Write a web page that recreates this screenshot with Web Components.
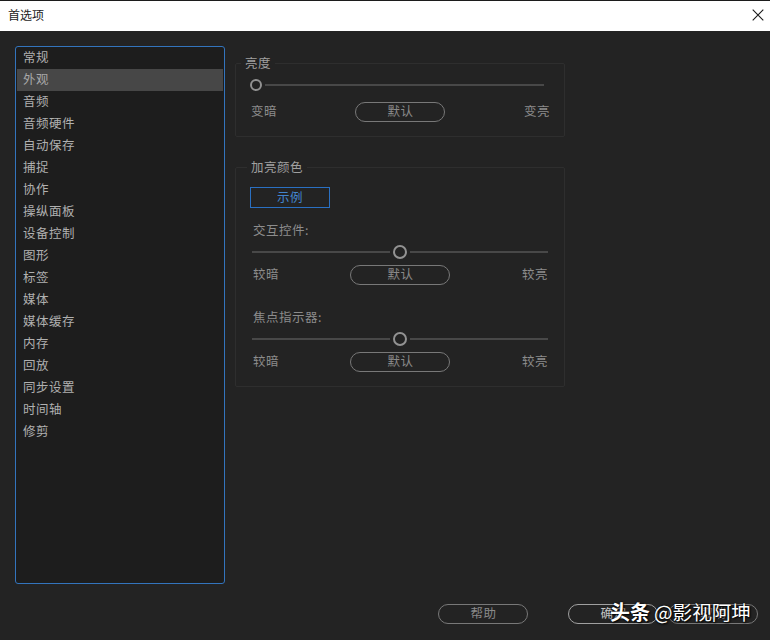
<!DOCTYPE html>
<html lang="zh-CN"><head><meta charset="utf-8"><title>首选项</title>
<style>
html,body{margin:0;height:100%;background:#232323}
body{font:13px/18px "Noto Sans CJK SC","Liberation Sans",sans-serif}
</style></head><body>
<pref-dialog></pref-dialog>
<script>
function def(name, css, html, init){
  customElements.define(name, class extends HTMLElement{
    constructor(){super();const s=this.attachShadow({mode:'open'});
      s.innerHTML='<style>'+css+'</style>'+html;}
    connectedCallback(){ if(init) init(this, this.shadowRoot); }
  });
}
const FONT='"Noto Sans CJK SC","Liberation Sans",sans-serif';

def('title-bar',`:host{display:flex;align-items:center;justify-content:space-between;box-sizing:border-box;height:31px;border-top:1px solid #1c1c1c;background:#fff;color:#1c1c1c;padding:0 6px 2px 8px;font:12px/18px ${FONT}}
svg{display:block;width:12px;height:12px}`,
`<slot></slot><svg viewBox="0 0 12 12" fill="none" stroke="#1a1a1a" stroke-width="1.1"><path d="M.7.7 11.3 11.3M11.3.7.7 11.3"/></svg>`);

def('nav-list',`:host{display:block;box-sizing:border-box;width:210px;height:538px;border:1px solid #3374bd;border-radius:3px;background:#1d1d1d;padding:0 1px}`,
`<slot></slot>`);
def('nav-item',`:host{display:block;height:22px;line-height:20px;padding-left:6px;color:#b0b0b0;letter-spacing:.5px;font-size:12.5px}
:host([selected]){background:#474747;color:#a8a8a8}`,`<slot></slot>`);

def('group-box',`:host{display:block;width:330px}
fieldset{margin:0;border:1px solid #2e2e2e;border-radius:2px;padding:var(--pad,7px 0 14px);min-width:0}
legend{margin-left:var(--leg,6px);padding:0 4px;font:12.5px/18px ${FONT};letter-spacing:.5px;color:#a0a0a0}`,
`<fieldset><legend id="l"></legend><slot></slot></fieldset>`,
(el,s)=>{s.getElementById('l').textContent=el.getAttribute('label')});

def('ui-slider',`:host{display:flex;align-items:center;gap:3px}
i{display:block;height:2px;background:#484848}
b{display:block;box-sizing:border-box;flex:none;width:var(--t,14px);height:var(--t,14px);border:2px solid #929292;border-radius:50%}
.a{flex:var(--v,1)}.c{flex:var(--w,1)}`,
`<i class="a"></i><b></b><i class="c"></i>`);

def('ui-button',`:host{display:flex;align-items:center;justify-content:center;box-sizing:border-box;width:var(--w,90px);height:20px;border:1px solid var(--bc,#787878);border-radius:10px;color:var(--fc,#8a8a8a);font:12.5px/16px ${FONT};letter-spacing:.5px;padding-bottom:2px;padding-left:1px}`,
`<slot></slot>`);

def('range-row',`:host{display:grid;grid-template-columns:1fr auto 1fr;align-items:center;color:#8c8c8c;font:12.5px/18px ${FONT};letter-spacing:.5px}
::slotted(span){margin-bottom:2px}
::slotted(span:last-child){justify-self:end;margin-right:-1px}`,
`<slot></slot>`);

def('sample-box',`:host{display:flex;align-items:center;justify-content:center;box-sizing:border-box;width:80px;height:21px;border:1px solid #2a70c2;color:#4285cc;font:12.5px/18px ${FONT};letter-spacing:.5px;padding-bottom:1px}`,`<slot></slot>`);

const items=['常规','外观','音频','音频硬件','自动保存','捕捉','协作','操纵面板','设备控制','图形','标签','媒体','媒体缓存','内存','回放','同步设置','时间轴','修剪'];

def('pref-dialog',`:host{display:flex;flex-direction:column;height:640px;position:relative;overflow:hidden;background:#232323;font:12.5px/18px ${FONT}}
.main{display:flex;gap:10px;padding:15px 0 0 15px}
.right{display:flex;flex-direction:column;gap:21px;padding-top:8px}
.s1{--t:12px;--v:0;--w:1;margin-left:11px;margin-right:20px}
.r1{margin:11px 15px 0 15px}
.sw{margin-left:14px}
.lab{color:#8c8c8c;letter-spacing:.5px;margin:13px 0 0 17px}
.lab.b{margin-top:23px}
.s2{margin:6px 16px 0}
.r2{margin:6px 17px 0}
.foot{display:flex;justify-content:flex-end;margin-top:20px;padding-right:12px;gap:10px}
.foot .help{margin-right:30px}
.foot .ok{--bc:#a0a0a0;--fc:#c4c4c4}
.wm{position:absolute;left:610px;top:599px;color:#fff;font-size:19.6px;line-height:26px;white-space:nowrap;text-shadow:0 0 2px #000,1px 1px 2px #000}
.wm b{font-size:20px;font-weight:700;margin-right:4px}`,
`<title-bar>首选项</title-bar>
<div class="main">
  <nav-list>${items.map((t,i)=>`<nav-item${i==1?' selected':''}>${t}</nav-item>`).join('')}</nav-list>
  <div class="right">
    <group-box label="亮度" style="--leg:5px;--pad:7px 0 14px">
      <ui-slider class="s1"></ui-slider>
      <range-row class="r1"><span>变暗</span><ui-button>默认</ui-button><span>变亮</span></range-row>
    </group-box>
    <group-box label="加亮颜色" style="--leg:11px;--pad:11px 0 14px">
      <sample-box class="sw">示例</sample-box>
      <div class="lab">交互控件:</div>
      <ui-slider class="s2"></ui-slider>
      <range-row class="r2"><span>较暗</span><ui-button style="--w:100px">默认</ui-button><span>较亮</span></range-row>
      <div class="lab b">焦点指示器:</div>
      <ui-slider class="s2"></ui-slider>
      <range-row class="r2"><span>较暗</span><ui-button style="--w:100px">默认</ui-button><span>较亮</span></range-row>
    </group-box>
  </div>
</div>
<div class="foot">
  <ui-button class="help">帮助</ui-button><ui-button class="ok">确定</ui-button><ui-button>取消</ui-button>
</div>
<div class="wm"><b>头条</b>@影视阿坤</div>`);
</script>
</body></html>
